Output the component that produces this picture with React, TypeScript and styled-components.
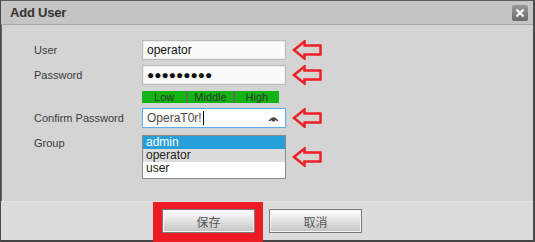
import React from "react";
import styled, { createGlobalStyle } from "styled-components";

const Global = createGlobalStyle`
  html, body { margin: 0; padding: 0; background: #ffffff; }
  body { font-family: "Liberation Sans", Arial, sans-serif; }
  * { box-sizing: border-box; }
`;

const Dialog = styled.div`
  width: 535px;
  height: 242px;
  display: flex;
  flex-direction: column;
  border-top: 1px solid #5c5c5c;
  border-left: 1px solid #4a4a4a;
  border-right: 2px solid #4a4a4a;
  background: #d4d4d4;
  overflow: hidden;
`;

const TitleBar = styled.div`
  height: 24px;
  flex: none;
  display: flex;
  align-items: center;
  justify-content: space-between;
  padding: 0 5px 0 9px;
  background: #c5c5c5;
  border-bottom: 1px solid #a6a6a6;
`;

const Title = styled.span`
  font-size: 13px;
  font-weight: bold;
  color: #333333;
  letter-spacing: -0.2px;
`;

const CloseButton = styled.button`
  width: 16px;
  height: 16px;
  padding: 0;
  border: none;
  border-radius: 2px;
  background: linear-gradient(#999999, #6a6a6a);
  display: flex;
  align-items: center;
  justify-content: center;
  margin-top: 1px;
`;

const Body = styled.div`
  flex: 1;
  border-left: 1px solid #666666;
  background: #d4d4d4;
  padding: 15px 0 0 32px;
  display: flex;
  flex-direction: column;
`;

const Row = styled.div<{ $top: number }>`
  display: flex;
  align-items: center;
  margin-top: ${(p) => p.$top}px;
`;

const Label = styled.div<{ $alignTop?: boolean }>`
  width: 108px;
  font-size: 11px;
  line-height: 16px;
  color: #3a3a3a;
  align-self: ${(p) => (p.$alignTop ? "flex-start" : "auto")};
`;

const Input = styled.div<{ $focus?: boolean }>`
  width: 144px;
  height: 20px;
  display: flex;
  align-items: center;
  padding: 0 6px 0 4px;
  background: ${(p) => (p.$focus ? "#ffffff" : "#fafafa")};
  border: 1px solid ${(p) => (p.$focus ? "#5eabf0" : "#bcbcbc")};
  box-shadow: ${(p) => (p.$focus ? "0 0 1px #9ccbf5" : "inset 0 0 0 1px #ececec")};
  font-size: 12px;
  color: ${(p) => (p.$focus ? "#4a4a4a" : "#111111")};
`;

const InputText = styled.span`
  flex: 1;
  display: flex;
  align-items: center;
  white-space: nowrap;
`;

const Dots = styled.span`
  font-size: 12px;
  color: #111111;
`;

const Caret = styled.span`
  display: inline-block;
  width: 1px;
  height: 14px;
  background: #000000;
  margin-left: 1px;
`;

const Strength = styled.div`
  width: 137px;
  height: 12px;
  display: flex;
  gap: 2px;
  background: #577357;
`;

const Level = styled.div`
  flex: 1;
  background: #12b312;
  color: #2a382a;
  font-size: 11px;
  line-height: 12px;
  text-align: center;
`;

const Spacer = styled.div`
  width: 108px;
`;

const List = styled.div`
  width: 144px;
  height: 44px;
  border: 1px solid #8a8a8a;
  background: #ffffff;
  display: flex;
  flex-direction: column;
`;

const Option = styled.div<{ $state?: "selected" | "hover" }>`
  height: 13px;
  line-height: 13px;
  padding-left: 3px;
  font-size: 12px;
  background: ${(p) =>
    p.$state === "selected" ? "#279fd9" : p.$state === "hover" ? "#dcdcdc" : "#ffffff"};
  color: ${(p) => (p.$state === "selected" ? "#ffffff" : "#222222")};
`;

const ArrowBox = styled.div`
  margin-left: 6px;
  width: 31px;
  height: 20px;
  display: flex;
`;

const Footer = styled.div`
  height: 41px;
  flex: none;
  display: flex;
  align-items: stretch;
  padding-left: 152px;
  gap: 6px;
  background: #dcdcdc;
  border-top: 1px solid #e2e2e2;
  box-shadow: inset 0 -2px 0 #444444;
`;

const Highlight = styled.div`
  background: #ed1c24;
  padding: 7px 8px 10px 9px;
  display: flex;
`;

const ActionButton = styled.button`
  width: 93px;
  height: 24px;
  border: 1px solid #7a7a7a;
  box-shadow: inset 0 0 0 1px #f4f4f4;
  background: linear-gradient(#fefefe, #e6e6e6 45%, #c2c2c2);
  font-family: "Noto Sans CJK SC", sans-serif;
  font-size: 12px;
  color: #555555;
  padding: 0;
`;

const CancelWrap = styled.div`
  padding-top: 7px;
`;

const Arrow = () => (
  <ArrowBox>
    <svg width="31" height="20" viewBox="0 0 31 20">
      <path
        d="M2 10 L12.5 1.5 L12.5 5.5 L28.5 5.5 L28.5 14.5 L12.5 14.5 L12.5 18.5 Z"
        fill="none"
        stroke="#ee1f26"
        strokeWidth="2.5"
        strokeLinejoin="miter"
      />
    </svg>
  </ArrowBox>
);

const EyeIcon = () => (
  <svg width="11" height="7" viewBox="0 0 11 7">
    <path d="M0.5 6 Q5.5 -1.5 10.5 6 L8.6 6 Q5.5 2.5 2.4 6 Z" fill="#4a4a4a" />
    <circle cx="5.5" cy="5" r="1.8" fill="#4a4a4a" />
  </svg>
);

export default function App() {
  return (
    <>
      <Global />
      <Dialog>
        <TitleBar>
          <Title>Add User</Title>
          <CloseButton aria-label="close">
            <svg width="10" height="10" viewBox="0 0 10 10">
              <path d="M1.5 1.5 L8.5 8.5 M8.5 1.5 L1.5 8.5" stroke="#ffffff" strokeWidth="2.2" />
            </svg>
          </CloseButton>
        </TitleBar>
        <Body>
          <Row $top={0}>
            <Label>User</Label>
            <Input>
              <InputText>operator</InputText>
            </Input>
            <Arrow />
          </Row>
          <Row $top={5}>
            <Label>Password</Label>
            <Input>
              <InputText>
                <Dots>●●●●●●●●●</Dots>
              </InputText>
            </Input>
            <Arrow />
          </Row>
          <Row $top={6}>
            <Spacer />
            <Strength>
              <Level>Low</Level>
              <Level>Middle</Level>
              <Level>High</Level>
            </Strength>
          </Row>
          <Row $top={5}>
            <Label>Confirm Password</Label>
            <Input $focus>
              <InputText>
                OperaT0r!
                <Caret />
              </InputText>
              <EyeIcon />
            </Input>
            <Arrow />
          </Row>
          <Row $top={7}>
            <Label $alignTop>Group</Label>
            <List>
              <Option $state="selected">admin</Option>
              <Option $state="hover">operator</Option>
              <Option>user</Option>
            </List>
            <Arrow />
          </Row>
        </Body>
        <Footer>
          <Highlight>
            <ActionButton>保存</ActionButton>
          </Highlight>
          <CancelWrap>
            <ActionButton>取消</ActionButton>
          </CancelWrap>
        </Footer>
      </Dialog>
    </>
  );
}
